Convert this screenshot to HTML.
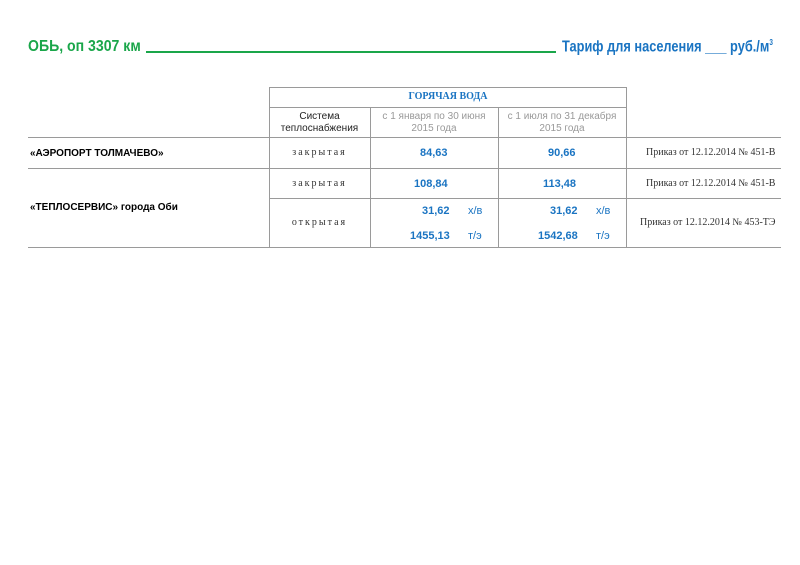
<!DOCTYPE html>
<html><head><meta charset="utf-8"><style>
body{margin:0;width:800px;height:565px;background:#fff;position:relative;overflow:hidden;font-family:"Liberation Sans",sans-serif}
.a{position:absolute;white-space:nowrap}
.h{position:absolute;height:1px;background:#9a9a9a}
.v{position:absolute;width:1px;background:#9a9a9a}
.t{font-weight:bold;font-size:16px}
.g{color:#1aa64a}.b{color:#1a74c2}
.n{font-weight:bold;font-size:11px;color:#1a74c2}
.s{font-family:"Liberation Serif",serif;font-size:10px;color:#333;letter-spacing:2px}
.p{font-family:"Liberation Serif",serif;font-size:10px;color:#333}
.c{text-align:center;font-size:10px;line-height:12px}
</style></head><body>
<div class="a t g" style="left:28px;top:38px;transform:scaleX(.88);transform-origin:left">ОБЬ, оп 3307 км</div>
<div class="h" style="left:146px;top:51px;width:410px;height:2px;background:#1aa64a"></div>
<div class="a t b" style="left:562px;top:38px;transform:scaleX(.8);transform-origin:left">Тариф для населения ___ руб./м<sup style="font-size:8px">3</sup></div>

<div class="h" style="left:269px;top:87px;width:358px"></div>
<div class="h" style="left:269px;top:107px;width:358px"></div>
<div class="h" style="left:28px;top:137px;width:753px"></div>
<div class="h" style="left:28px;top:168px;width:753px"></div>
<div class="h" style="left:269px;top:198px;width:512px"></div>
<div class="h" style="left:28px;top:247px;width:753px"></div>
<div class="v" style="left:269px;top:87px;height:161px"></div>
<div class="v" style="left:626px;top:87px;height:161px"></div>
<div class="v" style="left:370px;top:107px;height:141px"></div>
<div class="v" style="left:498px;top:107px;height:141px"></div>

<div class="a" style="left:269px;width:358px;top:91px;text-align:center;font-family:'Liberation Serif',serif;font-weight:bold;font-size:10px;color:#1a74c2">ГОРЯЧАЯ ВОДА</div>
<div class="a c" style="left:269px;width:101px;top:111px;color:#222">Система<br>теплоснабжения</div>
<div class="a c" style="left:370px;width:128px;top:111px;color:#999">с 1 января по 30 июня<br>2015 года</div>
<div class="a c" style="left:498px;width:128px;top:111px;color:#999">с 1 июля по 31 декабря<br>2015 года</div>

<div class="a" style="left:30px;top:148px;font-weight:bold;font-size:10px">«АЭРОПОРТ ТОЛМАЧЕВО»</div>
<div class="a" style="left:30px;top:202px;font-weight:bold;font-size:10px">«ТЕПЛОСЕРВИС» города Оби</div>

<div class="a s" style="left:269px;width:101px;text-align:center;top:147px">закрытая</div>
<div class="a s" style="left:269px;width:101px;text-align:center;top:178px">закрытая</div>
<div class="a s" style="left:269px;width:101px;text-align:center;top:217px">открытая</div>

<div class="a n" style="left:420px;top:147px">84,63</div>
<div class="a n" style="left:548px;top:147px">90,66</div>
<div class="a n" style="left:414px;top:178px">108,84</div>
<div class="a n" style="left:543px;top:178px">113,48</div>
<div class="a n" style="left:422px;top:205px">31,62</div>
<div class="a n" style="left:468px;top:205px;font-weight:normal">х/в</div>
<div class="a n" style="left:550px;top:205px">31,62</div>
<div class="a n" style="left:596px;top:205px;font-weight:normal">х/в</div>
<div class="a n" style="left:410px;top:230px">1455,13</div>
<div class="a n" style="left:468px;top:230px;font-weight:normal">т/э</div>
<div class="a n" style="left:538px;top:230px">1542,68</div>
<div class="a n" style="left:596px;top:230px;font-weight:normal">т/э</div>

<div class="a p" style="left:646px;top:147px">Приказ от 12.12.2014 № 451-В</div>
<div class="a p" style="left:646px;top:178px">Приказ от 12.12.2014 № 451-В</div>
<div class="a p" style="left:640px;top:217px">Приказ от 12.12.2014 № 453-ТЭ</div>
</body></html>
